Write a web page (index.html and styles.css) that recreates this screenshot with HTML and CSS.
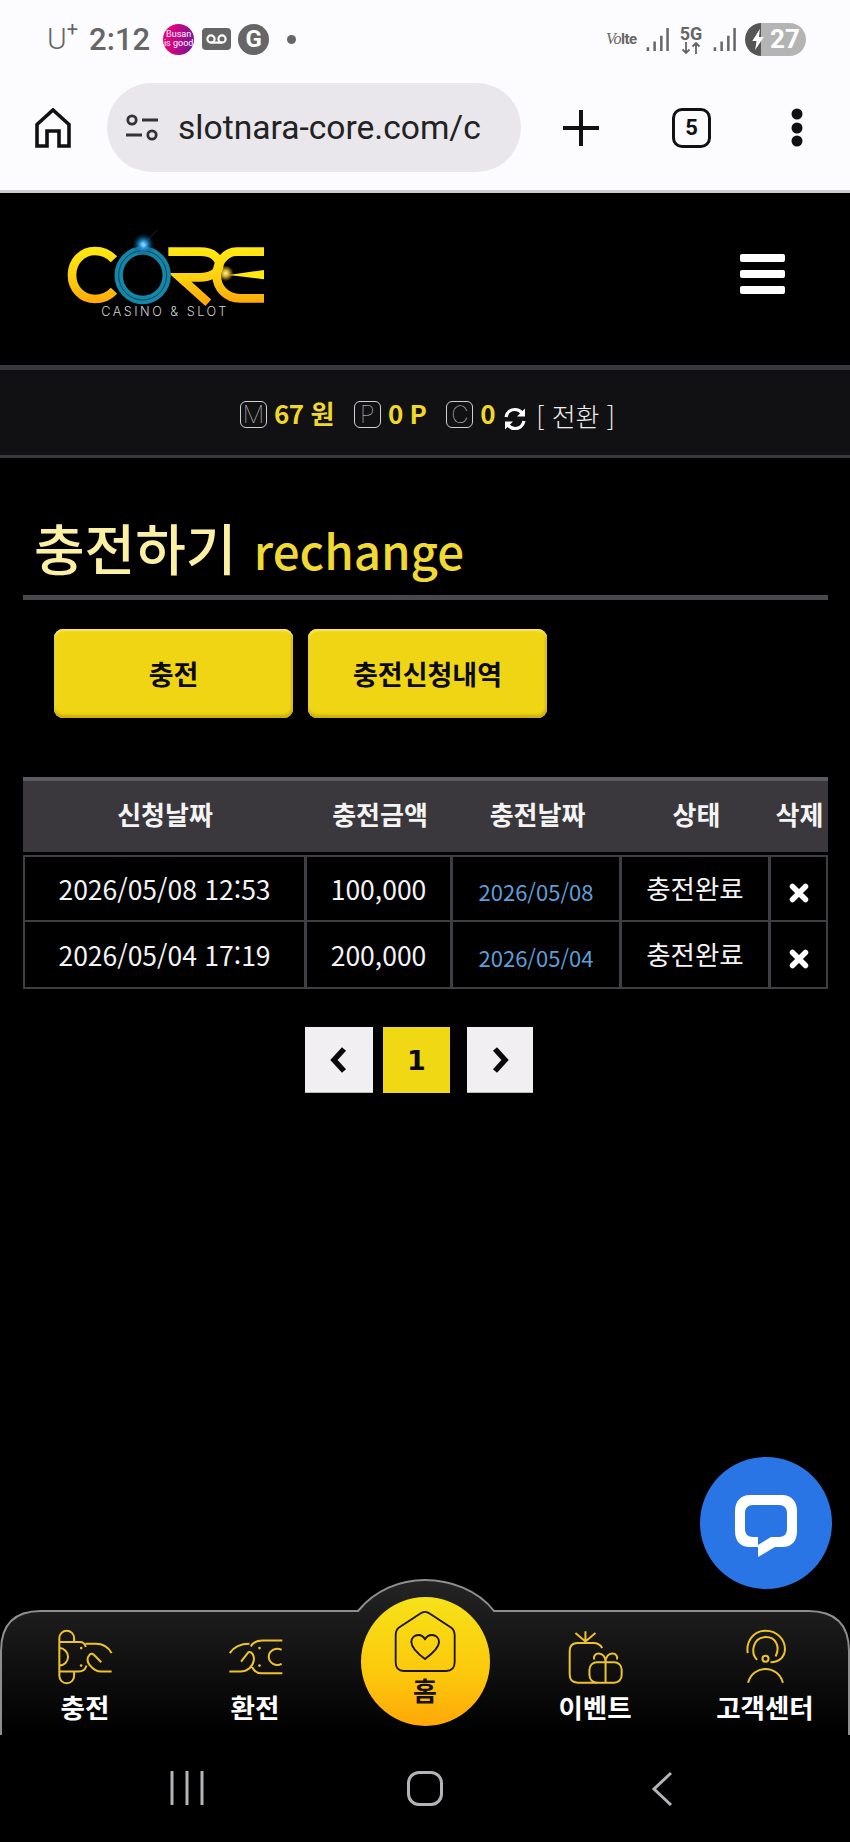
FILE: index.html
```html
<!DOCTYPE html>
<html lang="ko">
<head>
<meta charset="utf-8">
<title>충전하기</title>
<link rel="stylesheet" href="styles.css">
</head>
<body>
<div class="page">
  <div class="statusbar">
    <span class="carrier">U<sup>+</sup></span>
    <span class="clock">2:12</span>
    <span class="busan">Busan<br>is good</span>
    <svg class="vm" viewBox="0 0 29 22"><rect width="29" height="22" rx="4" fill="#666"/><circle cx="9" cy="11" r="3.6" fill="none" stroke="#fff" stroke-width="2.2"/><circle cx="20" cy="11" r="3.6" fill="none" stroke="#fff" stroke-width="2.2"/><path d="M9 14.6H20" stroke="#fff" stroke-width="2.2"/></svg>
    <span class="gicon">G</span>
    <span class="sdot"></span>
    <span class="status-right">
      <span class="volte"><i>Vo</i><b>lte</b></span>
      <svg class="sig" viewBox="0 0 24 24"><path d="M2 24v-4M9 24v-10M16 24V8M22.500 24V0" stroke="#666" stroke-width="2.600"/></svg>
      <span class="fiveg">5G<svg viewBox="0 0 24 12"><path d="M7 0v11M3.500 7.500L7 11l3.500-3.500M17 12V1M13.500 4.500L17 1l3.500 3.500" fill="none" stroke="#666" stroke-width="1.800"/></svg></span>
      <svg class="sig" viewBox="0 0 24 24"><path d="M2 24v-4M9 24v-10M16 24V8M22.500 24V0" stroke="#666" stroke-width="2.600"/></svg>
      <span class="battery"><svg class="bolt" viewBox="0 0 12 22"><path d="M8 0L0 12.500h4.500L3 22l9-13.500H7z" fill="#fff"/></svg><b>27</b></span>
    </span>
  </div>

  <div class="toolbar">
    <svg class="home-ic" viewBox="0 0 36 40"><path d="M2 38V16.500L18 2l16 14.500V38H24V23H12v15z" fill="none" stroke="#111" stroke-width="3.600" stroke-linejoin="miter"/></svg>
    <div class="omnibox">
      <svg class="tune" viewBox="0 0 32 27"><circle cx="6" cy="6" r="4.200" fill="none" stroke="#333" stroke-width="2.800"/><path d="M16 6H32M0 21H16" stroke="#333" stroke-width="3"/><circle cx="26" cy="21" r="4.200" fill="none" stroke="#333" stroke-width="2.800"/></svg>
      <span class="url">slotnara-core.com/c</span>
    </div>
    <svg class="plus" viewBox="0 0 36 36"><path d="M18 0V36M0 18H36" stroke="#111" stroke-width="4"/></svg>
    <span class="tabs">5</span>
    <svg class="more" viewBox="0 0 12 40"><circle cx="6" cy="6" r="5.500" fill="#111"/><circle cx="6" cy="20" r="5.500" fill="#111"/><circle cx="6" cy="33" r="5.500" fill="#111"/></svg>
  </div>

  <header class="site-header">
    <svg class="logo" viewBox="0 0 750 330" role="img" aria-label="CORE Casino &amp; Slot">
      <defs>
        <linearGradient id="gold" gradientUnits="userSpaceOnUse" x1="0" y1="80" x2="0" y2="250"><stop offset="0" stop-color="#ffe912"/><stop offset=".55" stop-color="#fcd010"/><stop offset="1" stop-color="#ffa808"/></linearGradient>
        <radialGradient id="blue"><stop offset="0" stop-color="#bfefff"/><stop offset=".3" stop-color="#2a9ae8"/><stop offset="1" stop-color="#05304f" stop-opacity="0"/></radialGradient>
        <radialGradient id="glare"><stop offset="0" stop-color="#fff6b0"/><stop offset=".4" stop-color="#ffdc40" stop-opacity=".8"/><stop offset="1" stop-color="#ffc000" stop-opacity="0"/></radialGradient>
      </defs>
      <g fill="none" stroke="url(#gold)" stroke-width="26">
        <path d="M222 118C205 100 185 93 165 93C125 93 96 125 96 165C96 205 125 237 165 237C185 237 205 230 222 212"/>
        <path d="M385 95H480C520 95 538 115 538 135C538 158 510 172 480 172H420L505 248"/>
        <path d="M672 95H590C555 95 530 130 530 165C530 205 560 235 600 235H672"/>
      </g>
      <path d="M565 165L672 150V178z" fill="#ffe912"/>
      <ellipse cx="308" cy="166" rx="72" ry="74" fill="none" stroke="#1586a8" stroke-width="25"/>
      <ellipse cx="308" cy="166" rx="72" ry="74" fill="none" stroke="#063a4c" stroke-width="2.500"/>
      <circle cx="557" cy="160" r="24" fill="url(#glare)"/>
      <circle cx="310" cy="74" r="34" fill="url(#blue)"/>
      <path d="M296 88L352 30" stroke="#1b78b8" stroke-width="1.500" opacity=".7"/>
      <text class="logo-sub" x="375" y="288" text-anchor="middle">CASINO &amp; SLOT</text>
    </svg>
    <div class="burger"><span></span><span></span><span></span></div>
  </header>

  <div class="points">
    <span class="pbox">M</span><b class="pval first">67 원</b>
    <span class="pbox gap-p">P</span><b class="pval">0 P</b>
    <span class="pbox gap-c">C</span><b class="pval">0</b>
    <svg class="refresh" viewBox="0 0 24 24"><path d="M3 10C4 5 8 2.500 12 2.500C15 2.500 17.500 4 19 6M21 14C20 19 16 21.500 12 21.500C9 21.500 6.500 20 5 18" fill="none" stroke="#fff" stroke-width="3.200"/><path d="M22 1.500V9.500H14zM2 22.500V14.500H10z" fill="#fff"/></svg>
    <span class="swap">[ 전환 ]</span>
  </div>

  <main class="content">
    <h1 class="title"><span class="title-ko">충전하기</span> <span class="title-en">rechange</span></h1>
    <div class="actions">
      <a class="btn">충전</a>
      <a class="btn">충전신청내역</a>
    </div>
    <table class="history">
      <colgroup><col class="c1"><col class="c2"><col class="c3"><col class="c4"><col class="c5"></colgroup>
      <thead>
        <tr><th>신청날짜</th><th>충전금액</th><th>충전날짜</th><th>상태</th><th>삭제</th></tr>
      </thead>
      <tbody>
        <tr><td>2026/05/08 12:53</td><td>100,000</td><td class="link">2026/05/08</td><td class="state">충전완료</td><td class="del"><svg viewBox="0 0 20 20"><path d="M3.500 3.500L16.500 16.500M16.500 3.500L3.500 16.500" stroke="#fff" stroke-width="5.500" stroke-linecap="round"/></svg></td></tr>
        <tr><td>2026/05/04 17:19</td><td>200,000</td><td class="link">2026/05/04</td><td class="state">충전완료</td><td class="del"><svg viewBox="0 0 20 20"><path d="M3.500 3.500L16.500 16.500M16.500 3.500L3.500 16.500" stroke="#fff" stroke-width="5.500" stroke-linecap="round"/></svg></td></tr>
      </tbody>
    </table>
    <nav class="pager">
      <a class="pg pg-prev"><svg viewBox="0 0 20 28"><path d="M15 3L5 14L15 25" fill="none" stroke="#0a0a0a" stroke-width="5.500"/></svg></a>
      <a class="pg pg-on">1</a>
      <a class="pg pg-next"><svg viewBox="0 0 20 28"><path d="M5 3L15 14L5 25" fill="none" stroke="#0a0a0a" stroke-width="5.500"/></svg></a>
    </nav>
  </main>

  <a class="chat"><svg viewBox="0 0 132 132"><path fill-rule="evenodd" fill="#fff" d="M50 38H82C92 38 97 45 97 54V74C97 84 92 90 82 90H75L58 100V90H50C40 90 35 84 35 74V54C35 45 40 38 50 38ZM53 48C48 48 45 51 45 56V72C45 77 48 80 53 80H58V88L71 80H79C84 80 87 77 87 72V56C87 51 84 48 79 48Z"/></svg></a>

  <footer class="tabbar">
    <svg class="tabbar-bg" viewBox="0 0 850 156" preserveAspectRatio="none">
      <defs><linearGradient id="panel" x1="0" y1="0" x2="0" y2="1"><stop offset="0" stop-color="#242424"/><stop offset=".45" stop-color="#141414"/><stop offset="1" stop-color="#000"/></linearGradient></defs>
      <path d="M1 156V72Q1 32 41 32H358C375 11 400 1 425 1C450 1 478 11 494 32H808Q849 32 849 72V156" fill="url(#panel)" stroke="#8e8e8e" stroke-width="2"/>
    </svg>
    <div class="tabs-row">
      <a class="tab">
        <svg class="tab-ic" viewBox="50 25 170 170"><g class="ic"><path d="M57 67V55a22 22 0 0 1 44 0V67M57 155V168a22 22 0 0 0 44 0V155M57 55V168M57 67H118C128 67 134 74 136 82M57 155H115C127 155 135 147 138 137M57 85a26 26 0 0 1 0 52M135 72H165C188 72 205 85 213 100M213 155H182C165 155 155 145 147 135C140 125 140 113 147 105C151 101 156 101 160 105L182 127"/><circle class="dot" cx="122" cy="85" r="4"/><circle class="dot" cx="122" cy="137" r="4"/></g></svg>
        <span class="tab-label">충전</span>
      </a>
      <a class="tab">
        <svg class="tab-ic" viewBox="560 25 170 170"><g class="ic"><path d="M725 62H665C647 62 637 68 631 80M725 160H662C647 160 638 150 633 137M723 90a26 24 0 1 0 0 42M568 100C580 82 597 72 627 72M567 155H600C620 155 636 142 640 122C642 106 634 95 624 97L602 125"/><circle class="dot" cx="657" cy="85" r="4"/><circle class="dot" cx="657" cy="137" r="4"/></g></svg>
        <span class="tab-label">환전</span>
      </a>
      <a class="tab tab-home">
        <svg class="home-house" viewBox="160 110 190 192"><path d="M167 190C167 178 168 172 176 166L240 124C250 117 260 117 270 124L334 166C342 172 344 178 344 190V270C344 287 335 296 318 296H192C175 296 167 287 167 270Z" fill="none" stroke="#1a1408" stroke-width="5.500"/><path d="M255 260C228 240 214 225 214 209C214 196 224 188 235 188C244 188 251 193 255 201C259 193 266 188 276 188C287 188 297 196 297 209C297 225 282 240 255 260Z" fill="none" stroke="#1a1408" stroke-width="5.500" stroke-linejoin="round"/></svg>
        <span class="home-label">홈</span>
      </a>
      <a class="tab">
        <svg class="tab-ic" viewBox="50 25 170 170"><g class="ic"><path d="M105 65V35M75 40L105 65L135 40M155 85C150 76 142 70 130 70H82C67 70 58 79 58 94V164C58 179 67 188 82 188H140"/><rect x="117" y="127" width="96" height="61" rx="22"/><path d="M165 127V188"/><path d="M165 127C165 110 155 101 145 101C134 101 128 110 131 119M165 127C165 110 175 101 185 101C196 101 202 110 199 119"/></g></svg>
        <span class="tab-label">이벤트</span>
      </a>
      <a class="tab">
        <svg class="tab-ic" viewBox="560 25 170 170"><g class="ic"><path d="M592 100C586 62 612 33 646 33C680 33 703 60 703 88C703 110 687 127 660 127"/><path d="M620 120C600 100 606 52 646 52C675 52 690 80 675 110"/><circle cx="645" cy="117" r="9"/><path d="M593 188C600 162 622 147 645 147C668 147 690 162 697 188"/></g></svg>
        <span class="tab-label">고객센터</span>
      </a>
    </div>
  </footer>

  <div class="sysnav">
    <svg class="recents" viewBox="0 0 34 34"><path d="M2 0V34M17 0V34M32 0V34" stroke="#b4b4b8" stroke-width="3"/></svg>
    <span class="sys-home"></span>
    <svg class="sys-back" viewBox="0 0 22 36"><path d="M20 2L3 18L20 34" fill="none" stroke="#b4b4b8" stroke-width="3"/></svg>
  </div>
</div>
</body>
</html>
```
FILE: styles.css
```css
* { box-sizing: border-box; }
html, body { margin: 0; padding: 0; background: #000; }
body { font-family: "Noto Sans CJK KR", "Noto Sans", sans-serif; }
.page { position: relative; width: 850px; height: 1842px; overflow: hidden; background: #000; }
a { color: inherit; text-decoration: none; }

/* Android status bar */
.statusbar { display: flex; align-items: center; height: 70px; padding: 8px 44px 0 47px; background: #fcfbfe; color: #666; font-family: Roboto, sans-serif; }
.carrier { font-size: 30px; font-weight: 300; line-height: 1; }
.carrier sup { font-size: 20px; line-height: 0; vertical-align: 13px; font-weight: 400; }
.clock { font-size: 31px; font-weight: 500; margin-left: 11px; line-height: 1; }
.busan { flex: none; width: 31px; height: 31px; margin-left: 13px; border-radius: 50%; background: linear-gradient(100deg, #e8007c 20%, #6a1a9c 100%); color: #fff; font-size: 9px; line-height: 9px; text-align: center; padding-top: 6px; overflow: hidden; white-space: nowrap; }
.vm { flex: none; width: 29px; height: 22px; margin-left: 8px; }
.gicon { flex: none; width: 31px; height: 31px; margin-left: 7px; border-radius: 50%; background: #666; color: #fff; font-size: 24px; font-weight: 700; line-height: 31px; text-align: center; }
.sdot { flex: none; width: 9px; height: 9px; margin-left: 18px; border-radius: 50%; background: #666; }
.status-right { display: flex; align-items: center; margin-left: auto; }
.volte { width: 32px; font-size: 15px; line-height: 1; white-space: nowrap; letter-spacing: -.5px; }
.volte i { font-family: "Liberation Serif", serif; font-size: 16px; }
.sig { width: 23px; height: 23px; }
.status-right .sig:nth-of-type(1) { margin-left: 8px; }
.fiveg { display: flex; flex-direction: column; align-items: center; width: 24px; margin: 0 10px; font-size: 18px; font-weight: 700; line-height: 17px; }
.fiveg svg { width: 24px; height: 12px; display: block; }
.battery { position: relative; display: flex; align-items: center; width: 61px; height: 33px; margin-left: 9px; border-radius: 17px; background: linear-gradient(90deg, #555 27%, #b4b4b4 27%); color: #fff; font-size: 26px; line-height: 33px; }
.battery b { margin-left: 25px; font-weight: 700; }
.bolt { position: absolute; left: 7px; top: 6px; width: 12px; height: 21px; }

/* Browser toolbar */
.toolbar { display: flex; align-items: flex-start; height: 123px; padding: 13px 0 0 35px; background: #fcfbfe; border-bottom: 3px solid #cfcdd1; }
.home-ic { width: 36px; height: 40px; margin-top: 25px; }
.omnibox { display: flex; align-items: center; width: 414px; height: 89px; margin-left: 36px; padding: 0 17px 0 19px; border-radius: 45px; background: #e9e7eb; }
.tune { width: 32px; height: 27px; flex: none; }
.url { flex: 0 0 326px; width: 326px; margin-left: 20px; overflow: hidden; white-space: nowrap; color: #222; font-family: Roboto, sans-serif; font-size: 33.600px; line-height: 44px; }
.plus { width: 36px; height: 36px; margin: 27px 0 0 42px; }
.tabs { width: 39px; height: 40px; margin: 25px 0 0 73px; border: 3.500px solid #111; border-radius: 10px; color: #111; font-family: Roboto, sans-serif; font-size: 22px; font-weight: 700; line-height: 33px; text-align: center; }
.more { width: 12px; height: 40px; margin: 25px 0 0 80px; }

/* Site header */
.site-header { display: flex; justify-content: space-between; align-items: flex-start; height: 172px; padding: 27px 65px 0 40px; }
.logo { width: 250px; height: 110px; }
.logo-sub { fill: #cfcfcf; font-family: Inter, "Liberation Sans", sans-serif; font-size: 38px; letter-spacing: 7.500px; font-weight: 300; }
.burger { display: flex; flex-direction: column; gap: 8px; margin-top: 34px; }
.burger span { display: block; width: 45px; height: 8px; border-radius: 2px; background: #fff; }

/* Points bar */
.points { display: flex; align-items: center; justify-content: flex-start; height: 93px; padding: 3px 0 0 240px; background: #111113; border-top: 5px solid #3a383c; border-bottom: 3px solid #3a383c; }
.pbox { width: 27px; height: 27px; border: 1px solid #d0d0d0; border-radius: 6px; color: #d8d8d8; font-family: Inter, sans-serif; font-size: 24px; font-weight: 100; line-height: 25px; text-align: center; }
.pval { margin: -3px 0 0 7px; color: #f1d72a; font-size: 26px; font-weight: 700; line-height: 27px; letter-spacing: -.5px; white-space: nowrap; }
.gap-p { margin-left: 20px; }
.gap-c { margin-left: 20px; }
.refresh { width: 24px; height: 24px; margin: 9px 0 0 8px; }
.swap { margin: 3px 0 0 9px; color: #eee; font-size: 26px; font-weight: 300; line-height: 30px; white-space: nowrap; }

/* Content */
.content { padding: 0 22px 0 23px; }
.title { margin: 0; padding: 58px 0 19px 11px; border-bottom: 5px solid #4a484c; font-size: 55px; font-weight: 500; line-height: 60px; white-space: nowrap; }
.title-ko { color: #fbf0a4; line-height: 40px; }
.title-en { margin-left: 2px; color: #f0d932; font-size: 47.500px; font-weight: 500; line-height: 40px; }
.actions { display: flex; gap: 15px; margin-top: 29px; padding-left: 31px; }
.btn { display: flex; align-items: center; justify-content: center; width: 239px; height: 89px; border-radius: 9px; background: #f0d514; color: #0a0a0a; font-size: 27px; font-weight: 700; box-shadow: inset 0 -3px 3px #c9ac10, inset 0 2px 2px #f8e86a, inset -2px 0 2px #d8bc10, inset 2px 0 2px #f4de40; }

.history { width: 805px; margin-top: 59px; border-collapse: separate; border-spacing: 0; table-layout: fixed; }
.c1 { width: 284px; } .c2 { width: 146px; } .c3 { width: 169px; } .c4 { width: 149px; } .c5 { width: 57px; }
.history th { height: 78px; padding: 0 0 6px; border-top: 4px solid #5c5a5e; border-bottom: 3px solid #000; background: #3a383c; background-clip: padding-box; color: #f4f4f4; font-size: 26px; font-weight: 700; white-space: nowrap; }
.history td { padding: 0; border-right: 3px solid #403e42; border-bottom: 2px solid #403e42; color: #f4f4f4; font-size: 26.500px; font-weight: 400; text-align: center; white-space: nowrap; }
.history tbody tr { height: 67px; }
.history tbody tr:first-child td { border-top: 2px solid #403e42; }
.history td:first-child { border-left: 2px solid #403e42; }
.history td:last-child { border-right: 2px solid #403e42; }
.history td.link { color: #5c9fd8; font-size: 22px; padding-top: 4px; }
.history td.state { font-size: 26.500px; padding-bottom: 3px; }
.history td.del svg { display: block; width: 20px; height: 20px; margin: 8px auto 0; }

.pager { display: flex; margin-top: 38px; padding-left: 282px; }
.pg { display: flex; align-items: center; justify-content: center; height: 66px; background: #f1eff2; box-shadow: inset 0 -1px 0 #bbb; }
.pg-prev { width: 68px; }
.pg-on { width: 67px; margin-left: 10px; background: #f0d814; color: #0a0a0a; font-family: "DejaVu Sans", sans-serif; font-size: 27px; font-weight: 700; box-shadow: none; }
.pg-next { width: 66px; margin-left: 17px; }
.pg svg { width: 20px; height: 28px; }

/* Floating chat */
.chat { position: absolute; left: 700px; top: 1457px; width: 132px; height: 132px; border-radius: 50%; background: #2a75e6; }
.chat svg { display: block; width: 132px; height: 132px; }

/* Bottom tab bar */
.tabbar { position: absolute; left: 0; top: 1579px; width: 850px; height: 156px; }
.tabbar-bg { position: absolute; inset: 0; width: 100%; height: 100%; overflow: visible; }
.tabs-row { position: relative; display: grid; grid-template-columns: repeat(5, 170px); height: 156px; }
.tab { display: flex; flex-direction: column; align-items: center; padding-top: 49px; color: #fff; }
.tab-ic { width: 57px; height: 57px; }
.ic { fill: none; stroke: #eec22e; stroke-width: 6; }
.ic .dot { fill: #eec22e; stroke: none; }
.tab-label { margin-top: 7px; font-size: 26.500px; font-weight: 700; line-height: 30px; white-space: nowrap; }
.tab-home { justify-self: center; width: 129px; height: 129px; margin-top: 18px; padding-top: 12px; border-radius: 50%; background: linear-gradient(180deg, #f6e218 0%, #fcc80c 60%, #ffa808 100%); }
.home-house { width: 64px; height: 64px; }
.home-label { margin-top: 2px; color: #15110a; font-size: 26px; font-weight: 700; line-height: 30px; }

/* System navigation */
.sysnav { position: absolute; left: 0; top: 1771px; width: 850px; height: 36px; display: flex; align-items: flex-start; padding-left: 170px; }
.recents { width: 34px; height: 34px; }
.sys-home { width: 36px; height: 35px; margin-left: 203px; border: 3px solid #b4b4b8; border-radius: 12px; }
.sys-back { width: 22px; height: 36px; margin-left: 208px; }
```
